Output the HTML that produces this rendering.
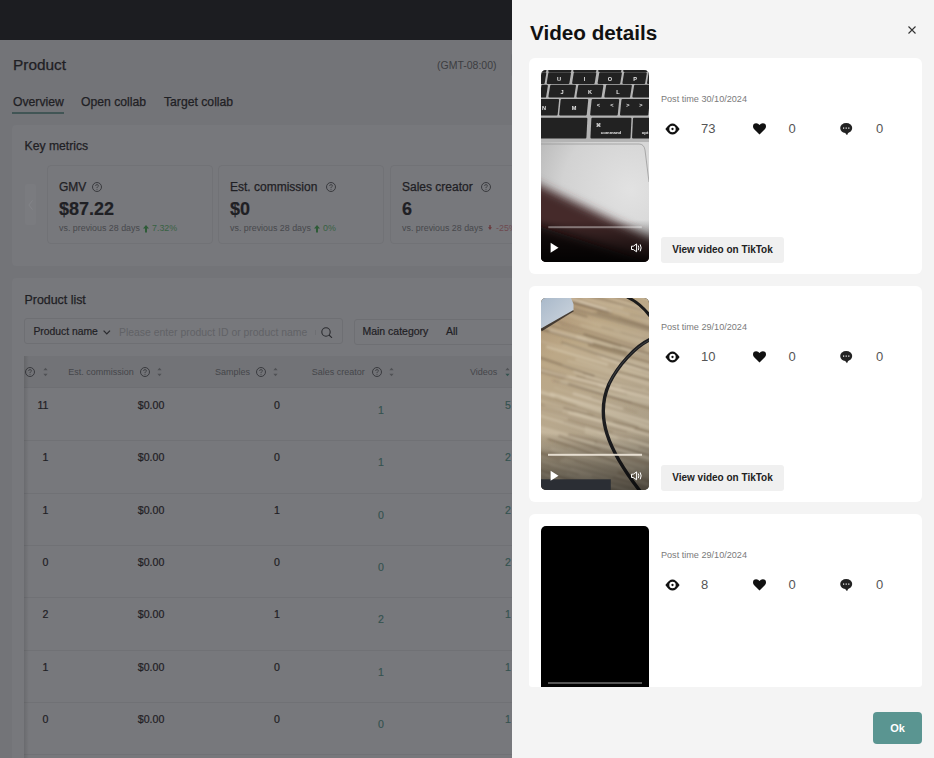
<!DOCTYPE html>
<html><head><meta charset="utf-8">
<style>
*{box-sizing:border-box;margin:0;padding:0}
html,body{width:934px;height:758px;overflow:hidden;background:#737478;font-family:"Liberation Sans",sans-serif}
.a{position:absolute;white-space:nowrap;line-height:1}
#page{position:absolute;left:0;top:0;width:934px;height:758px;overflow:hidden}
#topbar{position:absolute;left:0;top:0;width:934px;height:40px;background:#1c1d21}
.card{position:absolute;background:#77787c;border-radius:4px}
.t1{color:#1f2024;-webkit-text-stroke:0.2px #1f2024}
.t2{color:#45464a}
.mbox{position:absolute;top:165px;width:166px;height:79px;border:1px solid #717276;border-radius:4px}
#drawer{position:absolute;left:512px;top:0;width:422px;height:758px;background:#f4f4f4}
.vcard{position:absolute;left:0;width:393px;height:216px;background:#fff;border-radius:6px}
.thumb{position:absolute;left:12px;top:12px;width:108px;height:192px;border-radius:5px;overflow:hidden;background:#000}
.ptime{position:absolute;left:132px;top:36.8px;font-size:9.1px;color:#7a7a7a;line-height:1}
.num{position:absolute;font-size:13px;color:#555;line-height:1}
.vbtn{position:absolute;left:132px;top:179px;width:123px;height:26px;background:#f0f0f0;border-radius:3px;font-size:10px;font-weight:700;color:#222;line-height:26px;text-align:center}
</style></head><body>
<div id="page">
<div id="topbar"></div>
<div class="a t1" style="left:13px;top:57px;font-size:15.4px;-webkit-text-stroke:0.25px currentColor;">Product</div>
<div class="a" style="left:437px;top:60px;font-size:10.5px;color:#3c3d41">(GMT-08:00)</div>
<div class="a" style="left:511px;top:53px;width:30px;height:24px;border:1px solid #6c6d71;border-radius:3px"></div>
<div class="a t1" style="left:13px;top:96px;font-size:12.2px;-webkit-text-stroke:0.25px currentColor;">Overview</div>
<div class="a t1" style="left:81px;top:96px;font-size:12.2px;-webkit-text-stroke:0.25px currentColor;">Open collab</div>
<div class="a t1" style="left:164px;top:96px;font-size:12.2px;-webkit-text-stroke:0.25px currentColor;">Target collab</div>
<div class="a" style="left:12px;top:112px;width:52px;height:2px;background:#415555"></div>
<div class="card" style="left:12px;top:125px;width:600px;height:141px"></div>
<div class="a t1" style="left:24.5px;top:140px;font-size:12.2px;-webkit-text-stroke:0.25px currentColor;">Key metrics</div>
<div class="a" style="left:24.5px;top:183.5px;width:11px;height:41px;background:#7a7b7f;border-radius:2px"></div>
<svg class="a" style="left:27.5px;top:200px" width="5" height="10" viewBox="0 0 5 10"><path d="M4.5 0.5L0.8 5L4.5 9.5" stroke="#85868a" stroke-width="0.9" fill="none"/></svg>
<div class="mbox" style="left:47px"></div>
<div class="a t1" style="left:59px;top:180.8px;font-size:12px;-webkit-text-stroke:0.25px currentColor;">GMV</div>
<svg class="a" style="left:92px;top:181.5px" width="10" height="10" viewBox="0 0 10 10"><circle cx="5" cy="5" r="4.5" stroke="#3a3b3f" stroke-width="1" fill="none"/><path d="M3.6 3.9Q3.6 2.6 5 2.6Q6.4 2.6 6.4 3.8Q6.4 4.6 5.5 5Q5 5.3 5 6" stroke="#3a3b3f" stroke-width="0.85" fill="none"/><circle cx="5" cy="7.3" r="0.5" fill="#3a3b3f"/></svg>
<div class="a t1" style="left:59px;top:200px;font-size:18px;font-weight:700">$87.22</div>
<div class="a" style="left:59px;top:223.5px;font-size:8.9px;color:#47484c">vs. previous 28 days</div>
<svg class="a" style="left:143px;top:224.5px" width="6" height="8" viewBox="0 0 6 8"><path d="M3 0L6 3.6H4V7.5H2V3.6H0Z" fill="#2f5c38"/></svg>
<div class="a" style="left:152px;top:223.5px;font-size:8.9px;color:#386243">7.32%</div>
<div class="mbox" style="left:218px"></div>
<div class="a t1" style="left:230px;top:180.8px;font-size:12px;-webkit-text-stroke:0.25px currentColor;">Est. commission</div>
<svg class="a" style="left:325.5px;top:181.5px" width="10" height="10" viewBox="0 0 10 10"><circle cx="5" cy="5" r="4.5" stroke="#3a3b3f" stroke-width="1" fill="none"/><path d="M3.6 3.9Q3.6 2.6 5 2.6Q6.4 2.6 6.4 3.8Q6.4 4.6 5.5 5Q5 5.3 5 6" stroke="#3a3b3f" stroke-width="0.85" fill="none"/><circle cx="5" cy="7.3" r="0.5" fill="#3a3b3f"/></svg>
<div class="a t1" style="left:230px;top:200px;font-size:18px;font-weight:700">$0</div>
<div class="a" style="left:230px;top:223.5px;font-size:8.9px;color:#47484c">vs. previous 28 days</div>
<svg class="a" style="left:314px;top:224.5px" width="6" height="8" viewBox="0 0 6 8"><path d="M3 0L6 3.6H4V7.5H2V3.6H0Z" fill="#2f5c38"/></svg>
<div class="a" style="left:323px;top:223.5px;font-size:8.9px;color:#386243">0%</div>
<div class="mbox" style="left:390px"></div>
<div class="a t1" style="left:402px;top:180.8px;font-size:12px;-webkit-text-stroke:0.25px currentColor;">Sales creator</div>
<svg class="a" style="left:480.5px;top:181.5px" width="10" height="10" viewBox="0 0 10 10"><circle cx="5" cy="5" r="4.5" stroke="#3a3b3f" stroke-width="1" fill="none"/><path d="M3.6 3.9Q3.6 2.6 5 2.6Q6.4 2.6 6.4 3.8Q6.4 4.6 5.5 5Q5 5.3 5 6" stroke="#3a3b3f" stroke-width="0.85" fill="none"/><circle cx="5" cy="7.3" r="0.5" fill="#3a3b3f"/></svg>
<div class="a t1" style="left:402px;top:200px;font-size:18px;font-weight:700">6</div>
<div class="a" style="left:402px;top:223.5px;font-size:8.9px;color:#47484c">vs. previous 28 days</div>
<svg class="a" style="left:487.5px;top:225px" width="4" height="5" viewBox="0 0 4 5"><path d="M1.3 0H2.7V2.3H4L2 5L0 2.3H1.3Z" fill="#6b3a3d"/></svg>
<div class="a" style="left:496px;top:223.5px;font-size:8.9px;color:#6e4a50">-25%</div>
<div class="card" style="left:12px;top:278px;width:600px;height:500px"></div>
<div class="a t1" style="left:24.5px;top:294px;font-size:12.4px;-webkit-text-stroke:0.25px currentColor;">Product list</div>
<div class="a" style="left:24px;top:318px;width:319px;height:26px;border:1px solid #6e6f73;border-radius:3px"></div>
<div class="a t1" style="left:33.4px;top:327px;font-size:10.35px">Product name</div>
<svg class="a" style="left:103.3px;top:329.6px" width="8" height="5" viewBox="0 0 8 5"><path d="M0.6 0.6L3.8 3.9L7 0.6" stroke="#2a2b2f" stroke-width="1.25" fill="none"/></svg>
<div class="a" style="left:119px;top:327.5px;font-size:10.43px;color:#616266">Please enter product ID or product name</div>
<div class="a" style="left:314.5px;top:329.5px;width:1px;height:5px;background:#6e6f73"></div>
<svg class="a" style="left:321px;top:326.5px" width="12" height="11" viewBox="0 0 12 11"><circle cx="5" cy="5" r="4.2" stroke="#2a2b2f" stroke-width="1.1" fill="none"/><path d="M8 8L11 10.8" stroke="#2a2b2f" stroke-width="1.1"/></svg>
<div class="a" style="left:354px;top:319px;width:300px;height:26px;border:1px solid #6e6f73;border-radius:3px"></div>
<div class="a t1" style="left:362.4px;top:326.2px;font-size:10.5px">Main category</div>
<div class="a t1" style="left:446px;top:326.2px;font-size:10.5px">All</div>
<div class="a" style="left:24px;top:356px;width:600px;height:31px;background:#727377"></div>
<div class="a" style="left:24px;top:387px;width:600px;height:1px;background:#6e6f73"></div>
<svg class="a" style="left:25px;top:367px" width="10" height="10" viewBox="0 0 10 10"><circle cx="5" cy="5" r="4.5" stroke="#3a3b3f" stroke-width="1" fill="none"/><path d="M3.6 3.9Q3.6 2.6 5 2.6Q6.4 2.6 6.4 3.8Q6.4 4.6 5.5 5Q5 5.3 5 6" stroke="#3a3b3f" stroke-width="0.85" fill="none"/><circle cx="5" cy="7.3" r="0.5" fill="#3a3b3f"/></svg>
<svg class="a" style="left:42.5px;top:367px" width="5" height="10" viewBox="0 0 5 10"><path d="M0.4 3.2L2.5 0.8L4.6 3.2Z" fill="#505155"/><path d="M0.4 6.8L2.5 9.2L4.6 6.8Z" fill="#505155"/></svg>
<div class="a t2" style="left:68.3px;top:368px;font-size:9px">Est. commission</div>
<svg class="a" style="left:140px;top:367px" width="10" height="10" viewBox="0 0 10 10"><circle cx="5" cy="5" r="4.5" stroke="#3a3b3f" stroke-width="1" fill="none"/><path d="M3.6 3.9Q3.6 2.6 5 2.6Q6.4 2.6 6.4 3.8Q6.4 4.6 5.5 5Q5 5.3 5 6" stroke="#3a3b3f" stroke-width="0.85" fill="none"/><circle cx="5" cy="7.3" r="0.5" fill="#3a3b3f"/></svg>
<svg class="a" style="left:157px;top:367px" width="5" height="10" viewBox="0 0 5 10"><path d="M0.4 3.2L2.5 0.8L4.6 3.2Z" fill="#505155"/><path d="M0.4 6.8L2.5 9.2L4.6 6.8Z" fill="#505155"/></svg>
<div class="a t2" style="left:215px;top:368px;font-size:9px">Samples</div>
<svg class="a" style="left:256px;top:367px" width="10" height="10" viewBox="0 0 10 10"><circle cx="5" cy="5" r="4.5" stroke="#3a3b3f" stroke-width="1" fill="none"/><path d="M3.6 3.9Q3.6 2.6 5 2.6Q6.4 2.6 6.4 3.8Q6.4 4.6 5.5 5Q5 5.3 5 6" stroke="#3a3b3f" stroke-width="0.85" fill="none"/><circle cx="5" cy="7.3" r="0.5" fill="#3a3b3f"/></svg>
<svg class="a" style="left:273.2px;top:367px" width="5" height="10" viewBox="0 0 5 10"><path d="M0.4 3.2L2.5 0.8L4.6 3.2Z" fill="#505155"/><path d="M0.4 6.8L2.5 9.2L4.6 6.8Z" fill="#505155"/></svg>
<div class="a t2" style="left:311.8px;top:368px;font-size:9px">Sales creator</div>
<svg class="a" style="left:371.8px;top:367px" width="10" height="10" viewBox="0 0 10 10"><circle cx="5" cy="5" r="4.5" stroke="#3a3b3f" stroke-width="1" fill="none"/><path d="M3.6 3.9Q3.6 2.6 5 2.6Q6.4 2.6 6.4 3.8Q6.4 4.6 5.5 5Q5 5.3 5 6" stroke="#3a3b3f" stroke-width="0.85" fill="none"/><circle cx="5" cy="7.3" r="0.5" fill="#3a3b3f"/></svg>
<svg class="a" style="left:389px;top:367px" width="5" height="10" viewBox="0 0 5 10"><path d="M0.4 3.2L2.5 0.8L4.6 3.2Z" fill="#505155"/><path d="M0.4 6.8L2.5 9.2L4.6 6.8Z" fill="#505155"/></svg>
<div class="a t2" style="left:470px;top:368px;font-size:9px">Videos</div>
<svg class="a" style="left:504.5px;top:367px" width="5" height="10" viewBox="0 0 5 10"><path d="M0.4 3.2L2.5 0.8L4.6 3.2Z" fill="#505155"/><path d="M0.4 6.8L2.5 9.2L4.6 6.8Z" fill="#34524f"/></svg>
<div class="a t1" style="left:0;width:48.5px;text-align:right;top:400.00px;font-size:10.6px">11</div>
<div class="a t1" style="left:100px;width:64.3px;text-align:right;top:400.00px;font-size:10.6px">$0.00</div>
<div class="a t1" style="left:200px;width:79.8px;text-align:right;top:400.00px;font-size:10.6px">0</div>
<div class="a" style="left:331px;width:100px;text-align:center;top:405.00px;font-size:10.6px;color:#34524f;-webkit-text-stroke:0.15px #34524f">1</div>
<div class="a" style="left:411px;width:100px;text-align:right;top:400.00px;font-size:10.6px;color:#34524f;-webkit-text-stroke:0.15px #34524f">5</div>
<div class="a" style="left:24px;top:440.33px;width:600px;height:1px;background:#707175"></div>
<div class="a t1" style="left:0;width:48.5px;text-align:right;top:452.33px;font-size:10.6px">1</div>
<div class="a t1" style="left:100px;width:64.3px;text-align:right;top:452.33px;font-size:10.6px">$0.00</div>
<div class="a t1" style="left:200px;width:79.8px;text-align:right;top:452.33px;font-size:10.6px">0</div>
<div class="a" style="left:331px;width:100px;text-align:center;top:457.33px;font-size:10.6px;color:#34524f;-webkit-text-stroke:0.15px #34524f">1</div>
<div class="a" style="left:411px;width:100px;text-align:right;top:452.33px;font-size:10.6px;color:#34524f;-webkit-text-stroke:0.15px #34524f">2</div>
<div class="a" style="left:24px;top:492.66px;width:600px;height:1px;background:#707175"></div>
<div class="a t1" style="left:0;width:48.5px;text-align:right;top:504.66px;font-size:10.6px">1</div>
<div class="a t1" style="left:100px;width:64.3px;text-align:right;top:504.66px;font-size:10.6px">$0.00</div>
<div class="a t1" style="left:200px;width:79.8px;text-align:right;top:504.66px;font-size:10.6px">1</div>
<div class="a" style="left:331px;width:100px;text-align:center;top:509.66px;font-size:10.6px;color:#34524f;-webkit-text-stroke:0.15px #34524f">0</div>
<div class="a" style="left:411px;width:100px;text-align:right;top:504.66px;font-size:10.6px;color:#34524f;-webkit-text-stroke:0.15px #34524f">2</div>
<div class="a" style="left:24px;top:544.99px;width:600px;height:1px;background:#707175"></div>
<div class="a t1" style="left:0;width:48.5px;text-align:right;top:556.99px;font-size:10.6px">0</div>
<div class="a t1" style="left:100px;width:64.3px;text-align:right;top:556.99px;font-size:10.6px">$0.00</div>
<div class="a t1" style="left:200px;width:79.8px;text-align:right;top:556.99px;font-size:10.6px">0</div>
<div class="a" style="left:331px;width:100px;text-align:center;top:561.99px;font-size:10.6px;color:#34524f;-webkit-text-stroke:0.15px #34524f">0</div>
<div class="a" style="left:411px;width:100px;text-align:right;top:556.99px;font-size:10.6px;color:#34524f;-webkit-text-stroke:0.15px #34524f">2</div>
<div class="a" style="left:24px;top:597.32px;width:600px;height:1px;background:#707175"></div>
<div class="a t1" style="left:0;width:48.5px;text-align:right;top:609.32px;font-size:10.6px">2</div>
<div class="a t1" style="left:100px;width:64.3px;text-align:right;top:609.32px;font-size:10.6px">$0.00</div>
<div class="a t1" style="left:200px;width:79.8px;text-align:right;top:609.32px;font-size:10.6px">1</div>
<div class="a" style="left:331px;width:100px;text-align:center;top:614.32px;font-size:10.6px;color:#34524f;-webkit-text-stroke:0.15px #34524f">2</div>
<div class="a" style="left:411px;width:100px;text-align:right;top:609.32px;font-size:10.6px;color:#34524f;-webkit-text-stroke:0.15px #34524f">1</div>
<div class="a" style="left:24px;top:649.65px;width:600px;height:1px;background:#707175"></div>
<div class="a t1" style="left:0;width:48.5px;text-align:right;top:661.65px;font-size:10.6px">1</div>
<div class="a t1" style="left:100px;width:64.3px;text-align:right;top:661.65px;font-size:10.6px">$0.00</div>
<div class="a t1" style="left:200px;width:79.8px;text-align:right;top:661.65px;font-size:10.6px">0</div>
<div class="a" style="left:331px;width:100px;text-align:center;top:666.65px;font-size:10.6px;color:#34524f;-webkit-text-stroke:0.15px #34524f">1</div>
<div class="a" style="left:411px;width:100px;text-align:right;top:661.65px;font-size:10.6px;color:#34524f;-webkit-text-stroke:0.15px #34524f">1</div>
<div class="a" style="left:24px;top:701.98px;width:600px;height:1px;background:#707175"></div>
<div class="a t1" style="left:0;width:48.5px;text-align:right;top:713.98px;font-size:10.6px">0</div>
<div class="a t1" style="left:100px;width:64.3px;text-align:right;top:713.98px;font-size:10.6px">$0.00</div>
<div class="a t1" style="left:200px;width:79.8px;text-align:right;top:713.98px;font-size:10.6px">0</div>
<div class="a" style="left:331px;width:100px;text-align:center;top:718.98px;font-size:10.6px;color:#34524f;-webkit-text-stroke:0.15px #34524f">0</div>
<div class="a" style="left:411px;width:100px;text-align:right;top:713.98px;font-size:10.6px;color:#34524f;-webkit-text-stroke:0.15px #34524f">1</div>
<div class="a" style="left:24px;top:754.31px;width:600px;height:1px;background:#707175"></div>
<div class="a" style="left:24px;top:356px;width:5px;height:420px;background:linear-gradient(90deg,rgba(0,0,0,0.11),rgba(0,0,0,0))"></div>
</div>
<div id="drawer">
<div class="a" style="left:18px;top:22.5px;font-size:20.7px;font-weight:700;color:#111">Video details</div><svg class="a" style="left:396px;top:26px" width="8" height="8" viewBox="0 0 8 8"><path d="M0.5 0.5L7.5 7.5M7.5 0.5L0.5 7.5" stroke="#333" stroke-width="1.1"/></svg><div style="position:absolute;left:17px;top:58px;width:393px;height:629px;overflow:hidden;border-radius:0 0 3px 3px"><div class="vcard" style="top:0px"><div class="thumb"><svg width="108" height="192" viewBox="0 0 108 192" style="display:block"><defs><linearGradient id="kg" x1="0" y1="0" x2="0" y2="1"><stop offset="0" stop-color="#2e2e2e"/><stop offset="1" stop-color="#1f1f1f"/></linearGradient><radialGradient id="tp" gradientUnits="userSpaceOnUse" cx="90" cy="120" r="125"><stop offset="0" stop-color="#e2e2e2"/><stop offset="0.55" stop-color="#d2d2d2"/><stop offset="1" stop-color="#ababab"/></radialGradient><linearGradient id="dk" x1="0" y1="0" x2="0" y2="1"><stop offset="0" stop-color="#000" stop-opacity="0"/><stop offset="1" stop-color="#000" stop-opacity="0.85"/></linearGradient><filter id="bl" filterUnits="userSpaceOnUse" x="-50" y="0" width="220" height="260"><feGaussianBlur stdDeviation="5"/></filter><filter id="bl2"><feGaussianBlur stdDeviation="0.4"/></filter></defs><rect width="108" height="192" fill="url(#tp)"/><rect width="108" height="72" fill="#b4b4b4"/><path d="M0 74H98Q103 74 104 80L108 112" fill="none" stroke="#9a9a9a" stroke-width="0.8"/><g filter="url(#bl2)"><path d="M0.78 -2.50L4.78 -2.50L4.22 1.00L0.22 1.00Z" fill="#232323" stroke="#232323" stroke-width="2" stroke-linejoin="round"/><path d="M8.78 -2.50L29.78 -2.50L29.22 1.00L8.22 1.00Z" fill="#232323" stroke="#232323" stroke-width="2" stroke-linejoin="round"/><path d="M33.78 -2.50L54.78 -2.50L54.22 1.00L33.22 1.00Z" fill="#232323" stroke="#232323" stroke-width="2" stroke-linejoin="round"/><path d="M58.78 -2.50L79.78 -2.50L79.22 1.00L58.22 1.00Z" fill="#232323" stroke="#232323" stroke-width="2" stroke-linejoin="round"/><path d="M83.78 -2.50L105.78 -2.50L105.22 1.00L83.22 1.00Z" fill="#232323" stroke="#232323" stroke-width="2" stroke-linejoin="round"/><path d="M1.27 3.30L4.27 3.30L2.73 12.90L-0.27 12.90Z" fill="#232323" stroke="#232323" stroke-width="2" stroke-linejoin="round"/><path d="M8.27 3.30L28.97 3.30L27.43 12.90L6.73 12.90Z" fill="#232323" stroke="#232323" stroke-width="2" stroke-linejoin="round"/><path d="M33.67 3.30L54.27 3.30L52.73 12.90L32.13 12.90Z" fill="#232323" stroke="#232323" stroke-width="2" stroke-linejoin="round"/><path d="M59.17 3.30L79.87 3.30L78.33 12.90L57.63 12.90Z" fill="#232323" stroke="#232323" stroke-width="2" stroke-linejoin="round"/><path d="M83.97 3.30L104.77 3.30L103.23 12.90L82.43 12.90Z" fill="#232323" stroke="#232323" stroke-width="2" stroke-linejoin="round"/><path d="M108.57 3.30L110.27 3.30L108.73 12.90L107.03 12.90Z" fill="#232323" stroke="#232323" stroke-width="2" stroke-linejoin="round"/><path d="M1.36 15.80L5.86 15.80L4.14 26.50L-0.36 26.50Z" fill="#232323" stroke="#232323" stroke-width="2" stroke-linejoin="round"/><path d="M10.16 15.80L33.96 15.80L32.24 26.50L8.44 26.50Z" fill="#232323" stroke="#232323" stroke-width="2" stroke-linejoin="round"/><path d="M38.16 15.80L61.36 15.80L59.64 26.50L36.44 26.50Z" fill="#232323" stroke="#232323" stroke-width="2" stroke-linejoin="round"/><path d="M66.06 15.80L89.86 15.80L88.14 26.50L64.34 26.50Z" fill="#232323" stroke="#232323" stroke-width="2" stroke-linejoin="round"/><path d="M94.06 15.80L110.36 15.80L108.64 26.50L92.34 26.50Z" fill="#232323" stroke="#232323" stroke-width="2" stroke-linejoin="round"/><path d="M-1.77 30.00L17.12 30.00L15.67 44.50L-3.23 44.50Z" fill="#232323" stroke="#232323" stroke-width="2" stroke-linejoin="round"/><path d="M20.62 30.00L46.23 30.00L44.77 44.50L19.17 44.50Z" fill="#232323" stroke="#232323" stroke-width="2" stroke-linejoin="round"/><path d="M51.62 30.00L77.22 30.00L75.78 44.50L50.17 44.50Z" fill="#232323" stroke="#232323" stroke-width="2" stroke-linejoin="round"/><path d="M81.42 30.00L107.82 30.00L106.38 44.50L79.98 44.50Z" fill="#232323" stroke="#232323" stroke-width="2" stroke-linejoin="round"/><path d="M-2.03 48.70L45.37 48.70L44.43 67.50L-2.97 67.50Z" fill="#232323" stroke="#232323" stroke-width="2" stroke-linejoin="round"/><path d="M51.37 48.70L89.47 48.70L88.53 67.50L50.43 67.50Z" fill="#232323" stroke="#232323" stroke-width="2" stroke-linejoin="round"/><path d="M92.97 48.70L109.97 48.70L109.03 67.50L92.03 67.50Z" fill="#232323" stroke="#232323" stroke-width="2" stroke-linejoin="round"/><g fill="#e6e6e6" font-family="Liberation Sans" font-weight="700" font-size="5.6" text-anchor="middle"><text x="18" y="10.5">U</text><text x="43.5" y="10.5">I</text><text x="69" y="10.5">O</text><text x="94" y="10.5">P</text><text x="21" y="24">J</text><text x="49" y="24">K</text><text x="77" y="24">L</text><text x="3" y="40">N</text><text x="33" y="40">M</text><text x="57.5" y="37">&lt;</text><text x="71" y="37">&lt;</text><text x="87" y="37">&gt;</text><text x="100" y="37">&gt;</text><text x="57" y="57" font-size="5">&#8984;</text><text x="70" y="63.5" font-size="4.3">command</text><text x="104" y="63.5" font-size="4.3">opt</text></g></g><path d="M-20 106L130 178L130 220L-20 220Z" fill="#45292a" filter="url(#bl)"/><path d="M-20 150L130 200L130 220L-20 220Z" fill="#150d0c" filter="url(#bl)"/><rect y="150" width="108" height="42" fill="url(#dk)"/><rect x="7.3" y="156.2" width="93.5" height="2" fill="#fff" fill-opacity="0.38"/><path d="M9.6 172.7L17.5 177.7L9.6 182.7Z" fill="#fff"/><path d="M90.5 176.2H92.3L95.6 173.9V181.8L92.3 179.5H90.5Z" fill="none" stroke="#fff" stroke-width="1"/><path d="M97.3 175.5Q98.4 177.85 97.3 180.2" fill="none" stroke="#fff" stroke-width="1"/><path d="M99.2 174.4Q101.1 177.85 99.2 181.3" fill="none" stroke="#fff" stroke-width="1"/></svg></div><div class="ptime">Post time 30/10/2024</div><svg class="a" style="left:136px;top:64.5px" width="15" height="12" viewBox="0 0 15 12"><path d="M0.4 6Q7.5 -5.2 14.6 6Q7.5 17.2 0.4 6Z" fill="#111"/><circle cx="7.5" cy="6" r="3.2" fill="#fff"/><circle cx="7.5" cy="6" r="1.15" fill="#111"/></svg><svg class="a" style="left:224px;top:64.5px" width="13" height="12" viewBox="0 0 13 12"><path d="M6.5 11.5L1.2 6.2Q0 5 0 3.4Q0 0.3 3.2 0.3Q5.3 0.3 6.5 2Q7.7 0.3 9.8 0.3Q13 0.3 13 3.4Q13 5 11.8 6.2Z" fill="#111"/></svg><svg class="a" style="left:310.8px;top:64.5px" width="13" height="13" viewBox="0 0 13 13"><ellipse cx="6.2" cy="5.1" rx="6" ry="5" fill="#222"/><path d="M4.6 9.3L7 12.2L8.6 9.1Z" fill="#222"/><rect x="3" y="4.5" width="1.2" height="1.2" fill="#fff"/><rect x="5.6" y="4.5" width="1.2" height="1.2" fill="#fff"/><rect x="8.2" y="4.5" width="1.2" height="1.2" fill="#fff"/></svg><div class="num" style="left:172px;top:64.2px">73</div><div class="num" style="left:259.5px;top:64.2px">0</div><div class="num" style="left:347px;top:64.2px">0</div><div class="vbtn">View video on TikTok</div></div><div class="vcard" style="top:228px"><div class="thumb"><svg width="108" height="192" viewBox="0 0 108 192" style="display:block"><defs><linearGradient id="wd" x1="0" y1="0" x2="0.4" y2="1"><stop offset="0" stop-color="#ab9171"/><stop offset="0.3" stop-color="#bca887"/><stop offset="0.6" stop-color="#b8a88d"/><stop offset="1" stop-color="#a89c86"/></linearGradient><linearGradient id="lp" x1="0" y1="0" x2="1" y2="1"><stop offset="0" stop-color="#a9b9ca"/><stop offset="1" stop-color="#d0d7df"/></linearGradient><linearGradient id="dk2" x1="0" y1="0" x2="0" y2="1"><stop offset="0" stop-color="#000" stop-opacity="0"/><stop offset="1" stop-color="#000" stop-opacity="0.55"/></linearGradient><filter id="wb" x="-10%" y="-10%" width="120%" height="120%"><feGaussianBlur stdDeviation="1.1"/></filter></defs><rect width="108" height="192" fill="url(#wd)"/><g filter="url(#wb)"><path d="M27.2 63.1L159.6 101.0" stroke="#e0d4bd" stroke-opacity="0.24" stroke-width="1.9" stroke-linecap="round"/><path d="M35.6 78.0L154.9 107.7" stroke="#75614a" stroke-opacity="0.44" stroke-width="1.5" stroke-linecap="round"/><path d="M-35.0 123.4L103.2 169.9" stroke="#e0d4bd" stroke-opacity="0.23" stroke-width="2.2" stroke-linecap="round"/><path d="M23.4 -46.2L69.4 -34.3" stroke="#75614a" stroke-opacity="0.33" stroke-width="1.3" stroke-linecap="round"/><path d="M61.1 60.1L153.0 88.1" stroke="#e0d4bd" stroke-opacity="0.33" stroke-width="1.9" stroke-linecap="round"/><path d="M79.7 19.5L219.3 64.8" stroke="#75614a" stroke-opacity="0.25" stroke-width="2.4" stroke-linecap="round"/><path d="M-31.6 22.3L85.1 54.9" stroke="#75614a" stroke-opacity="0.49" stroke-width="2.7" stroke-linecap="round"/><path d="M-39.9 161.8L21.0 182.0" stroke="#e0d4bd" stroke-opacity="0.31" stroke-width="1.8" stroke-linecap="round"/><path d="M35.5 -31.7L153.4 -0.3" stroke="#75614a" stroke-opacity="0.49" stroke-width="1.0" stroke-linecap="round"/><path d="M-25.8 139.5L38.8 155.7" stroke="#e0d4bd" stroke-opacity="0.24" stroke-width="0.9" stroke-linecap="round"/><path d="M13.7 89.8L72.8 108.3" stroke="#e0d4bd" stroke-opacity="0.22" stroke-width="1.1" stroke-linecap="round"/><path d="M-14.5 55.2L52.5 77.8" stroke="#75614a" stroke-opacity="0.46" stroke-width="2.6" stroke-linecap="round"/><path d="M7.3 2.7L132.8 40.8" stroke="#e0d4bd" stroke-opacity="0.25" stroke-width="1.0" stroke-linecap="round"/><path d="M52.7 14.6L125.6 34.2" stroke="#75614a" stroke-opacity="0.37" stroke-width="1.0" stroke-linecap="round"/><path d="M32.2 10.8L109.3 32.8" stroke="#75614a" stroke-opacity="0.36" stroke-width="2.9" stroke-linecap="round"/><path d="M-18.1 166.6L37.4 185.0" stroke="#75614a" stroke-opacity="0.24" stroke-width="2.6" stroke-linecap="round"/><path d="M72.8 134.9L132.5 154.8" stroke="#e0d4bd" stroke-opacity="0.31" stroke-width="2.7" stroke-linecap="round"/><path d="M-35.4 -24.0L100.9 11.9" stroke="#75614a" stroke-opacity="0.44" stroke-width="2.4" stroke-linecap="round"/><path d="M-4.8 99.1L52.8 117.1" stroke="#75614a" stroke-opacity="0.36" stroke-width="1.0" stroke-linecap="round"/><path d="M33.7 163.1L101.7 185.7" stroke="#75614a" stroke-opacity="0.27" stroke-width="1.2" stroke-linecap="round"/><path d="M-32.7 61.4L24.9 77.4" stroke="#75614a" stroke-opacity="0.30" stroke-width="2.1" stroke-linecap="round"/><path d="M77.7 172.7L183.4 205.4" stroke="#75614a" stroke-opacity="0.19" stroke-width="2.1" stroke-linecap="round"/><path d="M69.2 -45.5L179.3 -8.5" stroke="#e0d4bd" stroke-opacity="0.33" stroke-width="0.8" stroke-linecap="round"/><path d="M-1.7 132.6L138.2 167.3" stroke="#e0d4bd" stroke-opacity="0.47" stroke-width="2.0" stroke-linecap="round"/><path d="M44.4 134.3L163.8 173.8" stroke="#e0d4bd" stroke-opacity="0.47" stroke-width="1.6" stroke-linecap="round"/><path d="M10.1 167.8L129.1 206.6" stroke="#e0d4bd" stroke-opacity="0.30" stroke-width="2.1" stroke-linecap="round"/><path d="M33.1 95.7L81.1 110.3" stroke="#e0d4bd" stroke-opacity="0.41" stroke-width="3.0" stroke-linecap="round"/><path d="M48.2 47.1L146.3 75.0" stroke="#75614a" stroke-opacity="0.42" stroke-width="2.6" stroke-linecap="round"/><path d="M32.2 -42.6L120.2 -19.4" stroke="#75614a" stroke-opacity="0.38" stroke-width="2.3" stroke-linecap="round"/><path d="M-9.3 180.1L31.8 191.2" stroke="#75614a" stroke-opacity="0.23" stroke-width="2.3" stroke-linecap="round"/><path d="M39.2 176.4L123.4 204.1" stroke="#e0d4bd" stroke-opacity="0.24" stroke-width="1.5" stroke-linecap="round"/><path d="M56.7 57.7L188.1 100.8" stroke="#e0d4bd" stroke-opacity="0.28" stroke-width="1.6" stroke-linecap="round"/><path d="M19.6 -16.0L143.3 24.2" stroke="#e0d4bd" stroke-opacity="0.27" stroke-width="2.4" stroke-linecap="round"/><path d="M14.1 -7.7L81.6 9.9" stroke="#e0d4bd" stroke-opacity="0.34" stroke-width="1.7" stroke-linecap="round"/><path d="M60.7 28.8L198.9 68.3" stroke="#75614a" stroke-opacity="0.46" stroke-width="1.0" stroke-linecap="round"/><path d="M45.0 -39.6L142.1 -13.3" stroke="#75614a" stroke-opacity="0.22" stroke-width="2.5" stroke-linecap="round"/><path d="M-37.0 63.7L85.9 96.1" stroke="#75614a" stroke-opacity="0.38" stroke-width="1.1" stroke-linecap="round"/><path d="M35.6 61.6L141.1 95.5" stroke="#e0d4bd" stroke-opacity="0.24" stroke-width="2.9" stroke-linecap="round"/><path d="M-18.6 68.8L22.5 80.6" stroke="#75614a" stroke-opacity="0.27" stroke-width="2.4" stroke-linecap="round"/><path d="M43.7 36.4L135.7 64.2" stroke="#75614a" stroke-opacity="0.43" stroke-width="2.5" stroke-linecap="round"/><path d="M-29.5 176.6L103.7 218.2" stroke="#75614a" stroke-opacity="0.38" stroke-width="1.1" stroke-linecap="round"/><path d="M5.2 177.5L102.1 209.3" stroke="#e0d4bd" stroke-opacity="0.33" stroke-width="2.6" stroke-linecap="round"/><path d="M-15.4 112.8L96.8 148.9" stroke="#e0d4bd" stroke-opacity="0.25" stroke-width="2.2" stroke-linecap="round"/><path d="M77.7 175.0L215.4 215.4" stroke="#75614a" stroke-opacity="0.47" stroke-width="2.5" stroke-linecap="round"/><path d="M1.8 163.9L50.1 177.7" stroke="#e0d4bd" stroke-opacity="0.34" stroke-width="2.0" stroke-linecap="round"/><path d="M57.1 -42.9L103.5 -28.0" stroke="#75614a" stroke-opacity="0.43" stroke-width="1.2" stroke-linecap="round"/><path d="M-22.2 -14.9L69.5 13.8" stroke="#e0d4bd" stroke-opacity="0.48" stroke-width="2.6" stroke-linecap="round"/><path d="M73.9 73.1L122.5 85.9" stroke="#75614a" stroke-opacity="0.41" stroke-width="2.0" stroke-linecap="round"/><path d="M22.7 109.7L147.1 146.5" stroke="#75614a" stroke-opacity="0.45" stroke-width="1.5" stroke-linecap="round"/><path d="M-15.0 175.1L110.1 217.3" stroke="#e0d4bd" stroke-opacity="0.24" stroke-width="2.0" stroke-linecap="round"/><path d="M20.4 84.0L120.9 108.4" stroke="#e0d4bd" stroke-opacity="0.31" stroke-width="2.9" stroke-linecap="round"/><path d="M27.5 150.3L116.6 177.8" stroke="#e0d4bd" stroke-opacity="0.31" stroke-width="0.9" stroke-linecap="round"/><path d="M70.8 189.2L137.7 208.4" stroke="#75614a" stroke-opacity="0.44" stroke-width="1.1" stroke-linecap="round"/><path d="M17.2 175.1L88.9 193.7" stroke="#e0d4bd" stroke-opacity="0.22" stroke-width="2.2" stroke-linecap="round"/><path d="M-37.3 144.8L22.1 160.4" stroke="#75614a" stroke-opacity="0.29" stroke-width="2.3" stroke-linecap="round"/><path d="M-27.4 104.9L85.7 133.5" stroke="#75614a" stroke-opacity="0.24" stroke-width="1.9" stroke-linecap="round"/><path d="M12.4 82.6L90.0 104.4" stroke="#75614a" stroke-opacity="0.25" stroke-width="2.0" stroke-linecap="round"/><path d="M36.6 107.8L129.6 138.1" stroke="#e0d4bd" stroke-opacity="0.25" stroke-width="2.1" stroke-linecap="round"/><path d="M57.3 135.2L187.5 170.6" stroke="#e0d4bd" stroke-opacity="0.25" stroke-width="1.5" stroke-linecap="round"/><path d="M66.5 199.6L119.9 213.7" stroke="#75614a" stroke-opacity="0.21" stroke-width="2.4" stroke-linecap="round"/><path d="M10.6 158.0L129.6 188.1" stroke="#e0d4bd" stroke-opacity="0.19" stroke-width="1.7" stroke-linecap="round"/><path d="M41.9 0.2L173.0 44.4" stroke="#e0d4bd" stroke-opacity="0.42" stroke-width="1.1" stroke-linecap="round"/><path d="M42.3 75.7L101.2 90.2" stroke="#75614a" stroke-opacity="0.36" stroke-width="1.0" stroke-linecap="round"/><path d="M28.2 78.7L82.9 92.8" stroke="#e0d4bd" stroke-opacity="0.50" stroke-width="1.2" stroke-linecap="round"/><path d="M-28.6 181.7L17.6 197.2" stroke="#e0d4bd" stroke-opacity="0.28" stroke-width="1.8" stroke-linecap="round"/><path d="M21.8 66.7L104.8 91.7" stroke="#e0d4bd" stroke-opacity="0.45" stroke-width="0.8" stroke-linecap="round"/><path d="M14.5 -4.7L128.4 27.3" stroke="#75614a" stroke-opacity="0.34" stroke-width="1.2" stroke-linecap="round"/><path d="M67.2 -46.1L187.4 -8.8" stroke="#e0d4bd" stroke-opacity="0.31" stroke-width="2.7" stroke-linecap="round"/><path d="M20.5 99.9L158.8 144.2" stroke="#e0d4bd" stroke-opacity="0.42" stroke-width="1.4" stroke-linecap="round"/><path d="M57.8 144.5L138.3 171.1" stroke="#e0d4bd" stroke-opacity="0.43" stroke-width="2.7" stroke-linecap="round"/><path d="M8.7 141.3L121.0 169.0" stroke="#75614a" stroke-opacity="0.18" stroke-width="1.6" stroke-linecap="round"/><path d="M36.6 38.9L139.0 65.9" stroke="#e0d4bd" stroke-opacity="0.29" stroke-width="2.9" stroke-linecap="round"/><path d="M28.3 114.9L121.7 141.0" stroke="#e0d4bd" stroke-opacity="0.40" stroke-width="3.0" stroke-linecap="round"/><path d="M77.6 140.4L119.9 153.2" stroke="#75614a" stroke-opacity="0.31" stroke-width="2.4" stroke-linecap="round"/><path d="M-16.5 -37.4L61.0 -18.0" stroke="#e0d4bd" stroke-opacity="0.36" stroke-width="1.4" stroke-linecap="round"/><path d="M76.1 77.0L172.9 109.8" stroke="#e0d4bd" stroke-opacity="0.20" stroke-width="2.2" stroke-linecap="round"/><path d="M51.1 99.4L95.6 114.2" stroke="#75614a" stroke-opacity="0.23" stroke-width="1.2" stroke-linecap="round"/><path d="M33.3 73.9L79.2 89.2" stroke="#e0d4bd" stroke-opacity="0.37" stroke-width="1.7" stroke-linecap="round"/><path d="M-5.7 41.4L99.8 72.6" stroke="#e0d4bd" stroke-opacity="0.27" stroke-width="1.4" stroke-linecap="round"/><path d="M-10.6 -46.5L33.7 -35.2" stroke="#75614a" stroke-opacity="0.47" stroke-width="2.5" stroke-linecap="round"/><path d="M-34.0 137.1L104.9 183.5" stroke="#e0d4bd" stroke-opacity="0.32" stroke-width="1.0" stroke-linecap="round"/><path d="M76.8 69.4L141.2 88.2" stroke="#e0d4bd" stroke-opacity="0.33" stroke-width="2.9" stroke-linecap="round"/><path d="M58.0 194.7L158.4 219.9" stroke="#75614a" stroke-opacity="0.25" stroke-width="2.2" stroke-linecap="round"/><path d="M23.4 -37.0L75.8 -22.1" stroke="#75614a" stroke-opacity="0.26" stroke-width="2.3" stroke-linecap="round"/><path d="M10.3 95.6L128.1 130.1" stroke="#e0d4bd" stroke-opacity="0.41" stroke-width="3.0" stroke-linecap="round"/><path d="M-26.3 9.6L102.9 50.8" stroke="#75614a" stroke-opacity="0.27" stroke-width="2.2" stroke-linecap="round"/><path d="M27.8 121.3L127.0 151.3" stroke="#75614a" stroke-opacity="0.26" stroke-width="2.5" stroke-linecap="round"/><path d="M69.9 194.9L197.8 226.1" stroke="#75614a" stroke-opacity="0.32" stroke-width="0.9" stroke-linecap="round"/><path d="M-27.7 105.8L66.5 129.1" stroke="#e0d4bd" stroke-opacity="0.36" stroke-width="1.0" stroke-linecap="round"/><path d="M4.8 107.8L92.6 130.7" stroke="#e0d4bd" stroke-opacity="0.45" stroke-width="1.6" stroke-linecap="round"/><path d="M-25.6 -31.4L95.3 5.1" stroke="#75614a" stroke-opacity="0.32" stroke-width="2.5" stroke-linecap="round"/><path d="M57.2 14.5L134.1 38.0" stroke="#75614a" stroke-opacity="0.36" stroke-width="3.0" stroke-linecap="round"/><path d="M70.5 136.5L153.3 159.4" stroke="#e0d4bd" stroke-opacity="0.21" stroke-width="1.0" stroke-linecap="round"/><path d="M27.7 -29.2L116.2 -1.9" stroke="#e0d4bd" stroke-opacity="0.20" stroke-width="1.5" stroke-linecap="round"/><path d="M39.5 3.3L87.6 16.3" stroke="#e0d4bd" stroke-opacity="0.27" stroke-width="2.4" stroke-linecap="round"/><path d="M2.9 -14.3L115.5 16.9" stroke="#e0d4bd" stroke-opacity="0.36" stroke-width="1.1" stroke-linecap="round"/><path d="M72.8 179.6L204.1 216.9" stroke="#75614a" stroke-opacity="0.28" stroke-width="2.6" stroke-linecap="round"/><path d="M72.2 49.9L201.6 84.2" stroke="#75614a" stroke-opacity="0.30" stroke-width="1.6" stroke-linecap="round"/><path d="M6.5 48.9L66.0 66.5" stroke="#e0d4bd" stroke-opacity="0.45" stroke-width="2.6" stroke-linecap="round"/><path d="M-18.8 90.7L97.1 128.7" stroke="#75614a" stroke-opacity="0.35" stroke-width="1.4" stroke-linecap="round"/><path d="M28.1 86.0L164.7 127.7" stroke="#75614a" stroke-opacity="0.35" stroke-width="2.6" stroke-linecap="round"/><path d="M-29.9 147.0L18.3 162.1" stroke="#75614a" stroke-opacity="0.38" stroke-width="2.8" stroke-linecap="round"/><path d="M49.5 -14.0L154.4 13.7" stroke="#e0d4bd" stroke-opacity="0.35" stroke-width="1.3" stroke-linecap="round"/><path d="M7.3 141.2L81.1 166.0" stroke="#75614a" stroke-opacity="0.35" stroke-width="2.3" stroke-linecap="round"/><path d="M45.0 130.2L176.5 167.2" stroke="#e0d4bd" stroke-opacity="0.45" stroke-width="2.6" stroke-linecap="round"/><path d="M60.1 151.5L188.9 194.7" stroke="#e0d4bd" stroke-opacity="0.41" stroke-width="2.2" stroke-linecap="round"/><path d="M10.6 150.6L92.6 171.5" stroke="#e0d4bd" stroke-opacity="0.30" stroke-width="2.4" stroke-linecap="round"/><path d="M-15.5 -8.1L67.0 14.1" stroke="#75614a" stroke-opacity="0.28" stroke-width="2.9" stroke-linecap="round"/><path d="M37.8 -21.3L155.4 9.0" stroke="#75614a" stroke-opacity="0.37" stroke-width="0.9" stroke-linecap="round"/><path d="M-35.6 177.3L15.2 190.5" stroke="#75614a" stroke-opacity="0.41" stroke-width="1.3" stroke-linecap="round"/><path d="M-13.1 98.7L45.4 114.4" stroke="#e0d4bd" stroke-opacity="0.28" stroke-width="1.2" stroke-linecap="round"/><path d="M58.1 87.1L146.0 110.5" stroke="#e0d4bd" stroke-opacity="0.29" stroke-width="2.8" stroke-linecap="round"/><path d="M74.8 86.8L163.1 110.0" stroke="#e0d4bd" stroke-opacity="0.44" stroke-width="0.9" stroke-linecap="round"/><path d="M23.3 46.2L114.9 70.7" stroke="#e0d4bd" stroke-opacity="0.26" stroke-width="3.0" stroke-linecap="round"/><path d="M16.7 -47.3L93.9 -22.6" stroke="#e0d4bd" stroke-opacity="0.23" stroke-width="2.4" stroke-linecap="round"/><path d="M-1.4 -10.8L64.6 10.8" stroke="#e0d4bd" stroke-opacity="0.50" stroke-width="1.9" stroke-linecap="round"/><path d="M24.1 16.6L79.2 34.1" stroke="#e0d4bd" stroke-opacity="0.45" stroke-width="0.8" stroke-linecap="round"/><path d="M-30.1 155.5L36.9 176.4" stroke="#75614a" stroke-opacity="0.33" stroke-width="1.0" stroke-linecap="round"/><path d="M30.4 188.9L156.1 222.9" stroke="#75614a" stroke-opacity="0.47" stroke-width="2.5" stroke-linecap="round"/><path d="M59.2 -27.3L120.0 -9.4" stroke="#75614a" stroke-opacity="0.45" stroke-width="2.0" stroke-linecap="round"/><path d="M-2.7 27.9L44.9 40.7" stroke="#e0d4bd" stroke-opacity="0.30" stroke-width="1.8" stroke-linecap="round"/><path d="M-27.3 121.8L52.1 144.5" stroke="#e0d4bd" stroke-opacity="0.39" stroke-width="2.9" stroke-linecap="round"/><path d="M5.3 -46.9L116.3 -17.6" stroke="#75614a" stroke-opacity="0.18" stroke-width="2.0" stroke-linecap="round"/><path d="M55.9 197.9L116.6 216.2" stroke="#75614a" stroke-opacity="0.35" stroke-width="1.4" stroke-linecap="round"/><path d="M0.5 24.6L79.7 48.8" stroke="#75614a" stroke-opacity="0.41" stroke-width="1.4" stroke-linecap="round"/><path d="M73.4 32.3L169.7 62.4" stroke="#e0d4bd" stroke-opacity="0.21" stroke-width="1.5" stroke-linecap="round"/><path d="M-28.7 -14.8L79.1 18.7" stroke="#75614a" stroke-opacity="0.45" stroke-width="1.2" stroke-linecap="round"/><path d="M-29.2 98.2L33.5 114.2" stroke="#75614a" stroke-opacity="0.20" stroke-width="1.1" stroke-linecap="round"/><path d="M11.2 180.2L102.4 207.9" stroke="#e0d4bd" stroke-opacity="0.30" stroke-width="2.5" stroke-linecap="round"/><path d="M9.5 32.9L51.0 44.5" stroke="#e0d4bd" stroke-opacity="0.43" stroke-width="2.3" stroke-linecap="round"/><path d="M33.0 115.1L74.9 126.5" stroke="#e0d4bd" stroke-opacity="0.21" stroke-width="1.6" stroke-linecap="round"/><path d="M21.1 44.4L140.0 82.7" stroke="#75614a" stroke-opacity="0.43" stroke-width="2.1" stroke-linecap="round"/><path d="M25.8 175.7L101.0 197.6" stroke="#e0d4bd" stroke-opacity="0.50" stroke-width="1.1" stroke-linecap="round"/><path d="M45.8 79.0L169.4 111.1" stroke="#e0d4bd" stroke-opacity="0.24" stroke-width="2.9" stroke-linecap="round"/><path d="M-10.6 -29.2L87.0 1.1" stroke="#e0d4bd" stroke-opacity="0.30" stroke-width="1.5" stroke-linecap="round"/><path d="M-25.1 65.8L112.2 100.6" stroke="#e0d4bd" stroke-opacity="0.36" stroke-width="2.8" stroke-linecap="round"/><path d="M-8.3 90.1L122.7 134.5" stroke="#e0d4bd" stroke-opacity="0.22" stroke-width="2.6" stroke-linecap="round"/><path d="M-5.4 156.2L124.3 190.4" stroke="#e0d4bd" stroke-opacity="0.24" stroke-width="2.1" stroke-linecap="round"/><path d="M-30.8 87.0L12.4 98.1" stroke="#e0d4bd" stroke-opacity="0.39" stroke-width="3.0" stroke-linecap="round"/><path d="M40.5 26.9L154.3 58.6" stroke="#e0d4bd" stroke-opacity="0.19" stroke-width="2.1" stroke-linecap="round"/><path d="M16.2 -0.1L70.5 15.0" stroke="#75614a" stroke-opacity="0.35" stroke-width="2.1" stroke-linecap="round"/><path d="M28.2 15.9L101.4 38.2" stroke="#e0d4bd" stroke-opacity="0.23" stroke-width="0.9" stroke-linecap="round"/><path d="M32.0 189.8L119.0 214.3" stroke="#e0d4bd" stroke-opacity="0.42" stroke-width="2.2" stroke-linecap="round"/><path d="M18.3 137.9L157.8 183.1" stroke="#75614a" stroke-opacity="0.32" stroke-width="2.7" stroke-linecap="round"/><path d="M68.6 91.5L161.2 118.6" stroke="#e0d4bd" stroke-opacity="0.28" stroke-width="1.8" stroke-linecap="round"/><path d="M47.1 -36.3L177.1 4.4" stroke="#e0d4bd" stroke-opacity="0.28" stroke-width="2.1" stroke-linecap="round"/><path d="M-31.6 98.4L20.8 113.3" stroke="#75614a" stroke-opacity="0.20" stroke-width="1.9" stroke-linecap="round"/><path d="M23.1 123.7L87.1 141.0" stroke="#75614a" stroke-opacity="0.20" stroke-width="1.7" stroke-linecap="round"/><path d="M76.0 177.8L182.5 212.6" stroke="#e0d4bd" stroke-opacity="0.25" stroke-width="1.7" stroke-linecap="round"/><path d="M28.0 136.7L158.4 169.2" stroke="#75614a" stroke-opacity="0.35" stroke-width="2.5" stroke-linecap="round"/><path d="M-39.9 187.7L24.5 205.1" stroke="#75614a" stroke-opacity="0.47" stroke-width="1.5" stroke-linecap="round"/><path d="M7.7 153.9L83.3 176.4" stroke="#75614a" stroke-opacity="0.47" stroke-width="0.9" stroke-linecap="round"/><path d="M19.8 27.0L153.2 72.0" stroke="#75614a" stroke-opacity="0.27" stroke-width="1.8" stroke-linecap="round"/><path d="M67.6 180.7L127.2 199.9" stroke="#75614a" stroke-opacity="0.24" stroke-width="1.6" stroke-linecap="round"/><path d="M79.4 169.9L139.6 188.2" stroke="#e0d4bd" stroke-opacity="0.20" stroke-width="1.2" stroke-linecap="round"/><path d="M47.1 -23.5L118.4 0.1" stroke="#e0d4bd" stroke-opacity="0.22" stroke-width="2.7" stroke-linecap="round"/><path d="M72.5 124.0L157.1 144.9" stroke="#75614a" stroke-opacity="0.41" stroke-width="1.3" stroke-linecap="round"/><path d="M-18.3 -0.9L45.3 18.6" stroke="#75614a" stroke-opacity="0.39" stroke-width="2.5" stroke-linecap="round"/><path d="M30.8 171.1L93.7 188.1" stroke="#e0d4bd" stroke-opacity="0.27" stroke-width="2.8" stroke-linecap="round"/><path d="M-29.2 110.0L109.1 149.3" stroke="#e0d4bd" stroke-opacity="0.19" stroke-width="2.0" stroke-linecap="round"/></g><path d="M0 32L32 12" stroke="#2a2420" stroke-width="3" stroke-opacity="0.8"/><path d="M0 0H30L32.5 6V12L0 30.5Z" fill="url(#lp)"/><path d="M86 -1Q99 5 109 18" fill="none" stroke="#1b1b1b" stroke-width="3"/><path d="M109 41.5C95 48 77 67 68 86C61 102 61 120 66 136C72 155 85 175 99 193" fill="none" stroke="#1d1d1f" stroke-width="3.4"/><path d="M108 42.5C94 49 76 68 67.5 87" fill="none" stroke="#6b7077" stroke-width="0.7" stroke-opacity="0.6"/><rect y="135" width="108" height="57" fill="url(#dk2)"/><rect x="7" y="155.8" width="94" height="2" fill="#efe8dc" fill-opacity="0.9"/><rect x="0" y="181.3" width="69.8" height="11" fill="#2b2e34"/><path d="M9.6 172.7L17.5 177.7L9.6 182.7Z" fill="#fff"/><path d="M90.5 176.2H92.3L95.6 173.9V181.8L92.3 179.5H90.5Z" fill="none" stroke="#fff" stroke-width="1"/><path d="M97.3 175.5Q98.4 177.85 97.3 180.2" fill="none" stroke="#fff" stroke-width="1"/><path d="M99.2 174.4Q101.1 177.85 99.2 181.3" fill="none" stroke="#fff" stroke-width="1"/></svg></div><div class="ptime">Post time 29/10/2024</div><svg class="a" style="left:136px;top:64.5px" width="15" height="12" viewBox="0 0 15 12"><path d="M0.4 6Q7.5 -5.2 14.6 6Q7.5 17.2 0.4 6Z" fill="#111"/><circle cx="7.5" cy="6" r="3.2" fill="#fff"/><circle cx="7.5" cy="6" r="1.15" fill="#111"/></svg><svg class="a" style="left:224px;top:64.5px" width="13" height="12" viewBox="0 0 13 12"><path d="M6.5 11.5L1.2 6.2Q0 5 0 3.4Q0 0.3 3.2 0.3Q5.3 0.3 6.5 2Q7.7 0.3 9.8 0.3Q13 0.3 13 3.4Q13 5 11.8 6.2Z" fill="#111"/></svg><svg class="a" style="left:310.8px;top:64.5px" width="13" height="13" viewBox="0 0 13 13"><ellipse cx="6.2" cy="5.1" rx="6" ry="5" fill="#222"/><path d="M4.6 9.3L7 12.2L8.6 9.1Z" fill="#222"/><rect x="3" y="4.5" width="1.2" height="1.2" fill="#fff"/><rect x="5.6" y="4.5" width="1.2" height="1.2" fill="#fff"/><rect x="8.2" y="4.5" width="1.2" height="1.2" fill="#fff"/></svg><div class="num" style="left:172px;top:64.2px">10</div><div class="num" style="left:259.5px;top:64.2px">0</div><div class="num" style="left:347px;top:64.2px">0</div><div class="vbtn">View video on TikTok</div></div><div class="vcard" style="top:456px"><div class="thumb"><div style="position:absolute;left:7px;top:156px;width:94px;height:2px;background:#555"></div></div><div class="ptime">Post time 29/10/2024</div><svg class="a" style="left:136px;top:64.5px" width="15" height="12" viewBox="0 0 15 12"><path d="M0.4 6Q7.5 -5.2 14.6 6Q7.5 17.2 0.4 6Z" fill="#111"/><circle cx="7.5" cy="6" r="3.2" fill="#fff"/><circle cx="7.5" cy="6" r="1.15" fill="#111"/></svg><svg class="a" style="left:224px;top:64.5px" width="13" height="12" viewBox="0 0 13 12"><path d="M6.5 11.5L1.2 6.2Q0 5 0 3.4Q0 0.3 3.2 0.3Q5.3 0.3 6.5 2Q7.7 0.3 9.8 0.3Q13 0.3 13 3.4Q13 5 11.8 6.2Z" fill="#111"/></svg><svg class="a" style="left:310.8px;top:64.5px" width="13" height="13" viewBox="0 0 13 13"><ellipse cx="6.2" cy="5.1" rx="6" ry="5" fill="#222"/><path d="M4.6 9.3L7 12.2L8.6 9.1Z" fill="#222"/><rect x="3" y="4.5" width="1.2" height="1.2" fill="#fff"/><rect x="5.6" y="4.5" width="1.2" height="1.2" fill="#fff"/><rect x="8.2" y="4.5" width="1.2" height="1.2" fill="#fff"/></svg><div class="num" style="left:172px;top:64.2px">8</div><div class="num" style="left:259.5px;top:64.2px">0</div><div class="num" style="left:347px;top:64.2px">0</div></div></div><div class="a" style="left:361px;top:712px;width:49px;height:32px;background:#5a9591;border-radius:4px;color:#fff;font-size:11px;font-weight:700;line-height:32px;text-align:center">Ok</div>
</div>
</body></html>
